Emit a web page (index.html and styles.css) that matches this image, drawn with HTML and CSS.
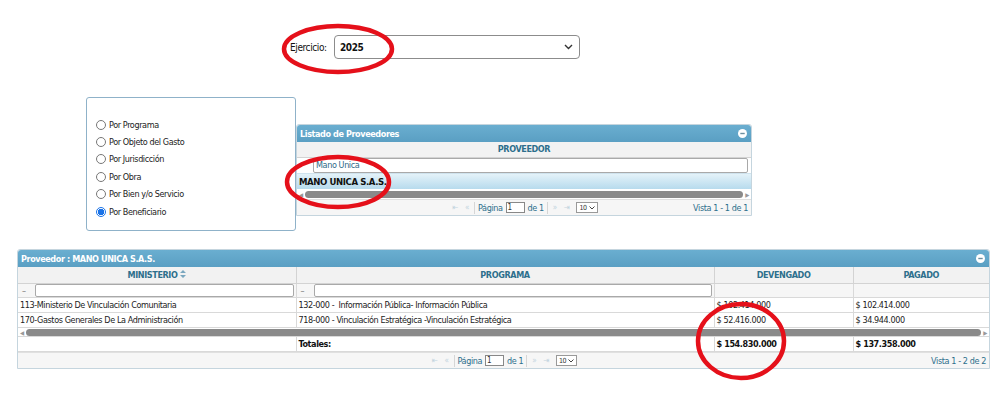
FILE: index.html
```html
<!DOCTYPE html>
<html lang="es">
<head>
  <meta charset="UTF-8" />
  <title>Consulta por Beneficiario</title>
  <link rel="stylesheet" href="styles.css">
</head>
<body>
  <div class="page">
    <!-- Ejercicio -->
    <div class="year-row">
      <label class="year-label" for="ejercicio">Ejercicio:</label>
      <div class="year-select">
        <span>2025</span>
        <svg class="chev" width="9" height="6" viewBox="0 0 9 6"><path d="M1 1l3.5 3.5L8 1" fill="none" stroke="#333" stroke-width="1.4"/></svg>
      </div>
    </div>

    <div class="middle">
      <!-- Opciones -->
      <div class="options">
        <label class="opt"><span class="radio"></span>Por Programa</label>
        <label class="opt"><span class="radio"></span>Por Objeto del Gasto</label>
        <label class="opt"><span class="radio"></span>Por Jurisdicción</label>
        <label class="opt"><span class="radio"></span>Por Obra</label>
        <label class="opt"><span class="radio"></span>Por Bien y/o Servicio</label>
        <label class="opt"><span class="radio checked"></span>Por Beneficiario</label>
      </div>

      <!-- Listado de Proveedores -->
      <div class="panel prov-panel">
        <div class="panel-head">
          <span>Listado de Proveedores</span>
          <svg class="collapse" width="9" height="9" viewBox="0 0 9 9"><circle cx="4.5" cy="4.5" r="4.5" fill="#fff"/><rect x="2.3" y="3.8" width="4.4" height="1.4" fill="#6d8fa0"/></svg>
        </div>
        <div class="col-head center">PROVEEDOR</div>
        <div class="filter-row">
          <span class="filter-pad"></span>
          <div class="filter-input">Mano Unica</div>
        </div>
        <div class="sel-row">MANO UNICA S.A.S.</div>
        <div class="hscroll">
          <span class="arr">&#9664;</span><span class="track"></span><span class="arr">&#9654;</span>
        </div>
        <div class="pager">
          <span></span>
          <div class="pager-mid">
            <span class="pg-ico">&#x21E4;</span><span class="pg-ico">&#xAB;</span>
            <span class="sep"></span>
            Página <span class="pg-box">1</span> de 1
            <span class="sep"></span>
            <span class="pg-ico">&#xBB;</span><span class="pg-ico">&#x21E5;</span>
            <span class="pg-sel">10 <svg width="6" height="4" viewBox="0 0 6 4"><path d="M0.5 0.5l2.5 2.5 2.5-2.5" fill="none" stroke="#444" stroke-width="1"/></svg></span>
          </div>
          <span class="vista">Vista 1 - 1 de 1</span>
        </div>
      </div>
    </div>

    <!-- Detalle del proveedor -->
    <div class="panel detail">
      <div class="panel-head">
        <span>Proveedor : MANO UNICA S.A.S.</span>
        <svg class="collapse" width="9" height="9" viewBox="0 0 9 9"><circle cx="4.5" cy="4.5" r="4.5" fill="#fff"/><rect x="2.3" y="3.8" width="4.4" height="1.4" fill="#6d8fa0"/></svg>
      </div>
      <table class="grid">
        <colgroup>
          <col style="width:278px"><col style="width:418px"><col style="width:139px"><col>
        </colgroup>
        <tr class="head">
          <th>MINISTERIO <svg width="6" height="8" viewBox="0 0 6 8"><path d="M3 0L6 3H0z M3 8L0 5h6z" fill="#7aa7bf"/></svg></th>
          <th>PROGRAMA</th>
          <th>DEVENGADO</th>
          <th>PAGADO</th>
        </tr>
        <tr class="filters">
          <td><div class="ff"><span class="dash">&#8211;</span><span class="fbox"></span></div></td>
          <td><div class="ff"><span class="dash">&#8211;</span><span class="fbox"></span></div></td>
          <td></td>
          <td></td>
        </tr>
        <tr class="data">
          <td>113-Ministerio De Vinculación Comunitaria</td>
          <td>132-000 -&nbsp; Información Pública- Información Pública</td>
          <td>$ 102.414.000</td>
          <td>$ 102.414.000</td>
        </tr>
        <tr class="data">
          <td>170-Gastos Generales De La Administración</td>
          <td>718-000 - Vinculación Estratégica -Vinculación Estratégica</td>
          <td>$ 52.416.000</td>
          <td>$ 34.944.000</td>
        </tr>
      </table>
      <div class="hscroll wide">
        <span class="arr">&#9664;</span><span class="track"></span><span class="arr">&#9654;</span>
      </div>
      <table class="grid totals">
        <colgroup>
          <col style="width:278px"><col style="width:418px"><col style="width:139px"><col>
        </colgroup>
        <tr>
          <td></td>
          <td>Totales:</td>
          <td>$ 154.830.000</td>
          <td>$ 137.358.000</td>
        </tr>
      </table>
      <div class="pager">
        <span></span>
        <div class="pager-mid">
          <span class="pg-ico">&#x21E4;</span><span class="pg-ico">&#xAB;</span>
          <span class="sep"></span>
          Página <span class="pg-box">1</span> de 1
          <span class="sep"></span>
          <span class="pg-ico">&#xBB;</span><span class="pg-ico">&#x21E5;</span>
          <span class="pg-sel">10 <svg width="6" height="4" viewBox="0 0 6 4"><path d="M0.5 0.5l2.5 2.5 2.5-2.5" fill="none" stroke="#444" stroke-width="1"/></svg></span>
        </div>
        <span class="vista">Vista 1 - 2 de 2</span>
      </div>
    </div>

    <!-- Marcas rojas de anotación -->
    <svg class="marks" width="999" height="399" viewBox="0 0 999 399">
      <ellipse cx="338" cy="49" rx="54" ry="23" />
      <ellipse cx="338" cy="182" rx="51" ry="25" />
      <ellipse cx="741" cy="341" rx="43" ry="37" />
    </svg>
  </div>
</body>
</html>
```

FILE: styles.css
```css
body {
  margin: 0;
  background: #fff;
  font-family: "DejaVu Sans Condensed", "DejaVu Sans", sans-serif;
  font-stretch: condensed;
  font-size: 9px;
  letter-spacing: -0.4px;
  color: #222;
}

.page {
  position: relative;
  width: 999px;
  height: 399px;
  overflow: hidden;
}

/* Ejercicio */
.year-row {
  display: flex;
  align-items: center;
  padding: 35px 0 0 290px;
  height: 24px;
}

.year-label {
  width: 44px;
  font-size: 10px;
  color: #111;
}

.year-select {
  width: 246px;
  height: 24px;
  box-sizing: border-box;
  border: 1px solid #8c8c8c;
  border-radius: 4px;
  display: flex;
  align-items: center;
  justify-content: space-between;
  padding: 0 6px 0 5px;
  font-size: 10px;
  font-weight: bold;
  color: #111;
}

/* Opciones + listado */
.middle {
  display: flex;
  align-items: flex-start;
  margin: 38px 0 0 86px;
}

.options {
  width: 210px;
  height: 134px;
  box-sizing: border-box;
  border: 1px solid #8fb2c9;
  border-radius: 3px;
  padding: 18px 0 0 9px;
  display: flex;
  flex-direction: column;
}

.opt {
  display: flex;
  align-items: center;
  height: 17.4px;
  color: #222;
}

.radio {
  width: 8px;
  height: 8px;
  border: 1px solid #777;
  border-radius: 50%;
  margin-right: 3px;
  box-sizing: content-box;
  background: #fff;
}

.radio.checked {
  border-color: #1a73e8;
  background: radial-gradient(circle, #1a73e8 0 3px, #fff 3.5px);
}

/* Panel estilo jqGrid */
.panel {
  border: 1px solid #c5d5de;
  border-radius: 3px 3px 0 0;
  background: #fff;
}

.prov-panel {
  width: 454px;
  margin-top: 27px;
}

.panel-head {
  height: 17px;
  background: linear-gradient(#6aaed0, #5a9fc3);
  color: #fff;
  font-weight: bold;
  display: flex;
  align-items: center;
  justify-content: space-between;
  padding: 0 4px 0 3px;
  border-radius: 3px 3px 0 0;
}

.col-head {
  height: 15px;
  line-height: 15px;
  background: #f2f2f2;
  border-bottom: 1px solid #d3d3d3;
  font-weight: bold;
  color: #2d6f8c;
}

.center {
  text-align: center;
}

.filter-row {
  display: flex;
  align-items: center;
  height: 15px;
  padding-right: 3px;
}

.filter-pad {
  width: 16px;
}

.filter-input {
  flex: 1;
  height: 13px;
  border: 1px solid #a9a9a9;
  border-radius: 2px;
  color: #2e6b88;
  line-height: 13px;
  padding-left: 2px;
}

.sel-row {
  height: 15px;
  line-height: 15px;
  background: linear-gradient(#e4f2f9, #b7dbed);
  border-top: 1px solid #cfe3ee;
  font-weight: bold;
  color: #111;
  padding-left: 2px;
  font-size: 9.5px;
}

.hscroll {
  display: flex;
  align-items: center;
  height: 10px;
  padding: 0 2px;
  gap: 2px;
}

.arr {
  font-size: 6px;
  color: #999;
}

.track {
  flex: 1;
  height: 7px;
  border-radius: 4px;
  background: #8a8a8a;
}

.pager {
  height: 15px;
  background: #f6f6f6;
  border-top: 1px solid #e0e0e0;
  display: grid;
  grid-template-columns: 1fr auto 1fr;
  align-items: center;
  padding: 0 3px;
  font-size: 9px;
}

.pager-mid {
  display: flex;
  align-items: center;
  gap: 3px;
  color: #2d6f8c;
}

.pg-ico {
  color: #c2d4de;
  font-size: 8px;
  margin: 0 2px;
}

.sep {
  width: 1px;
  height: 12px;
  background: #d6d6d6;
}

.pg-box {
  display: inline-block;
  width: 16px;
  height: 9px;
  line-height: 9px;
  border: 1px solid #888;
  background: #fff;
  color: #333;
  font-size: 8px;
  padding-left: 1px;
}

.pg-sel {
  display: inline-flex;
  align-items: center;
  gap: 2px;
  height: 9px;
  border: 1px solid #999;
  background: #fff;
  padding: 0 2px;
  font-size: 7px;
  color: #333;
  margin-left: 2px;
}

.vista {
  text-align: right;
  color: #2d6f8c;
}

/* Detalle */
.detail {
  margin: 18px 0 0 17px;
  width: 971px;
}

.grid {
  width: 100%;
  border-collapse: collapse;
  table-layout: fixed;
}

.grid th {
  height: 16px;
  padding: 0;
  background: #f2f2f2;
  border-right: 1px solid #d3d3d3;
  border-bottom: 1px solid #d3d3d3;
  color: #2d6f8c;
  font-weight: bold;
  text-align: center;
}

.grid td {
  padding: 0 2px;
  height: 14px;
  border-right: 1px solid #d9d9d9;
  border-bottom: 1px solid #d9d9d9;
  white-space: nowrap;
  overflow: hidden;
}

.grid th:last-child,
.grid td:last-child {
  border-right: none;
}

.filters td {
  background: #f6f6f6;
  padding: 0;
  height: 13px;
}

.ff {
  display: flex;
  align-items: center;
  padding: 0 2px 0 4px;
}

.dash {
  width: 13px;
  color: #777;
}

.fbox {
  flex: 1;
  height: 11px;
  border: 1px solid #a9a9a9;
  border-radius: 2px;
  background: #fff;
}

.hscroll.wide {
  height: 8px;
  border-bottom: 1px solid #d9d9d9;
}

.totals td {
  height: 14px;
  font-weight: bold;
  color: #111;
}

/* Marcas */
.marks {
  position: absolute;
  left: 0;
  top: 0;
  pointer-events: none;
}

.marks ellipse {
  fill: none;
  stroke: #e5101a;
  stroke-width: 4.5;
}
```
